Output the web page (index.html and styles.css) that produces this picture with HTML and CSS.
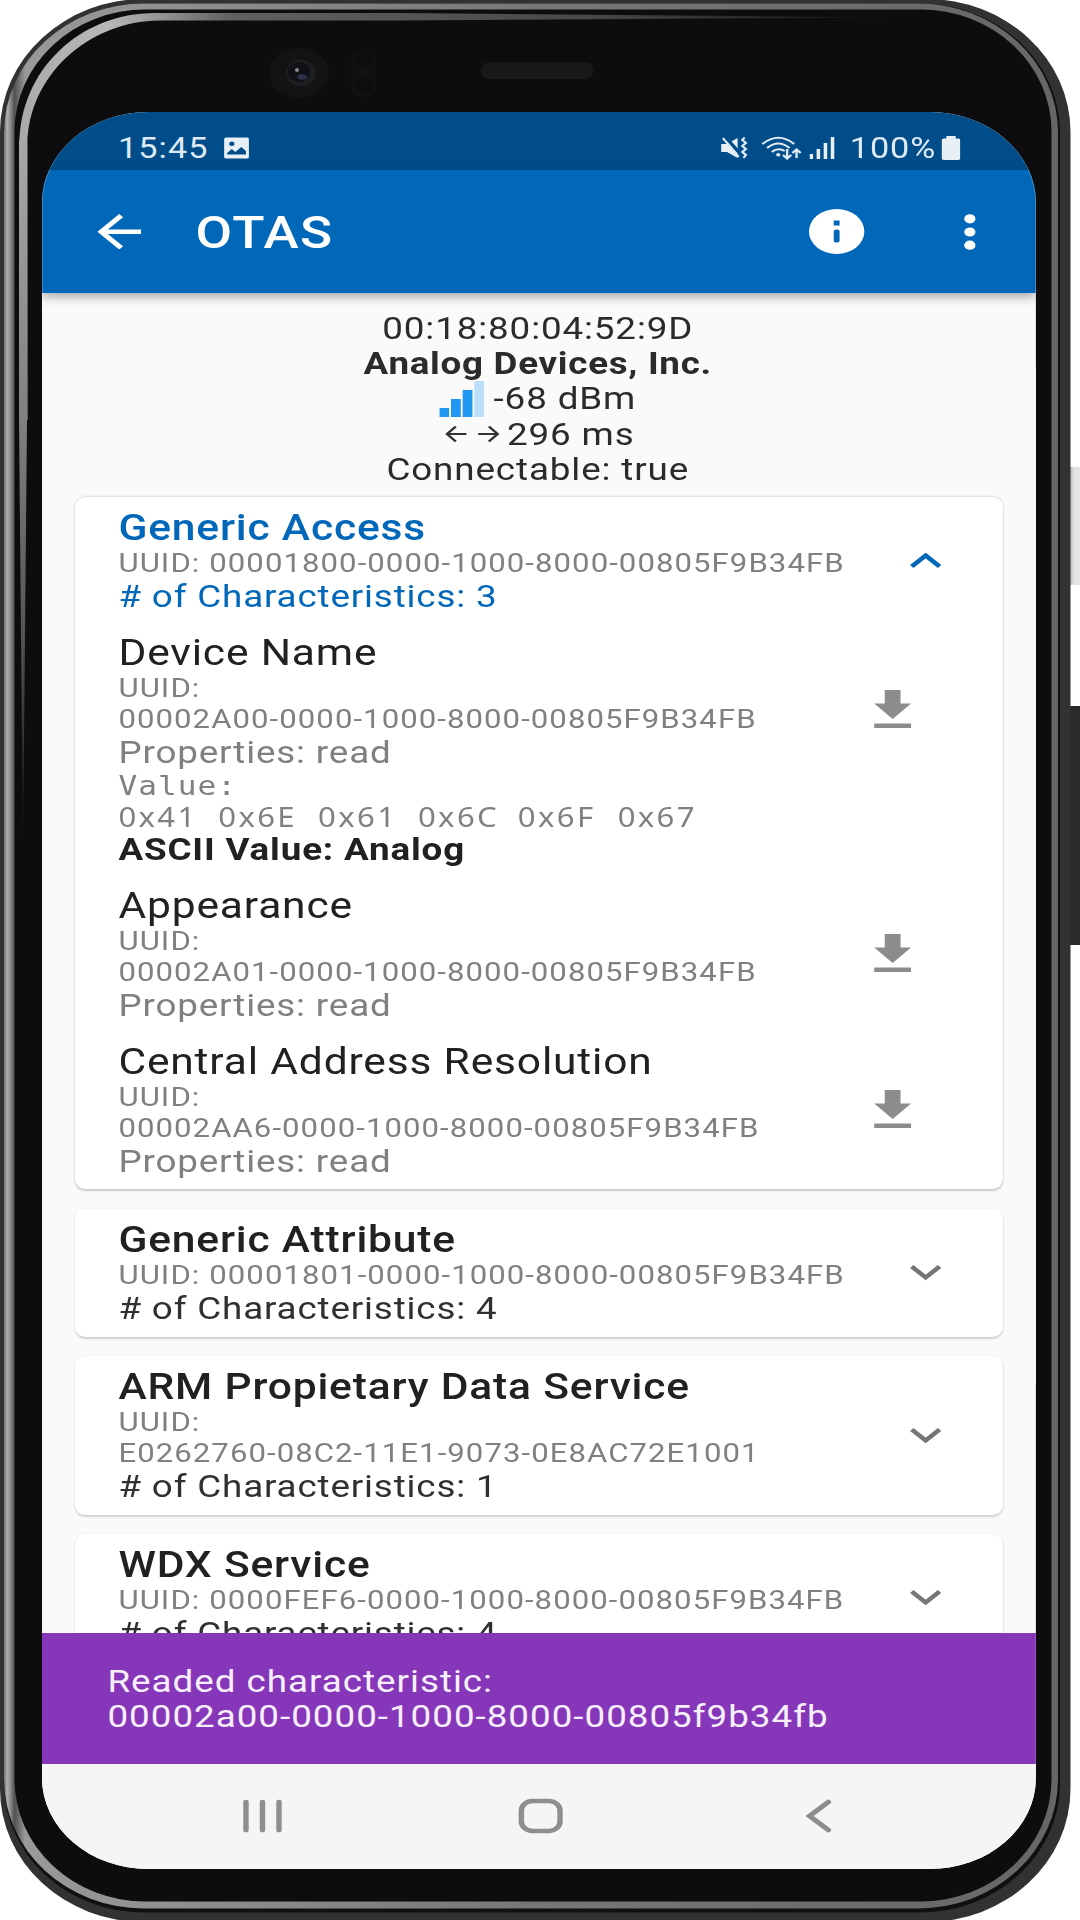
FILE: index.html
```html
<!DOCTYPE html>
<html lang="en">
<head>
<meta charset="utf-8">
<title>OTAS</title>
<link rel="stylesheet" href="styles.css">
</head>
<body>
<div class="phone">
  <svg class="frame" viewBox="0 0 1080 1920" aria-hidden="true">
    <defs>
      <linearGradient id="rim" gradientUnits="userSpaceOnUse" x1="4" y1="0" x2="1059" y2="0">
        <stop offset="0" stop-color="#707070"/><stop offset=".003" stop-color="#b0b0b0"/><stop offset=".005" stop-color="#9a9a9a"/><stop offset=".01" stop-color="#505050"/><stop offset=".02" stop-color="#999"/><stop offset=".5" stop-color="#777"/><stop offset="1" stop-color="#666"/>
      </linearGradient>
      <linearGradient id="shineSide" gradientUnits="userSpaceOnUse" x1="0" y1="130" x2="0" y2="850">
        <stop offset="0" stop-color="#aaa"/><stop offset=".4" stop-color="#808080"/><stop offset=".7" stop-color="#555"/><stop offset="1" stop-color="#0d0d0f"/>
      </linearGradient>
      <linearGradient id="shineTop" gradientUnits="userSpaceOnUse" x1="20" y1="0" x2="900" y2="0">
        <stop offset="0" stop-color="#aaa"/><stop offset=".1" stop-color="#b8b8b8"/><stop offset=".24" stop-color="#606060"/><stop offset=".65" stop-color="#484848"/><stop offset="1" stop-color="#0d0d0f"/>
      </linearGradient>
      <linearGradient id="powerKey" x1="0" y1="0" x2="1" y2="0">
        <stop offset="0" stop-color="#aaa"/><stop offset=".35" stop-color="#e2e2e2"/><stop offset="1" stop-color="#e4e4e4"/>
      </linearGradient>
    </defs>
    <rect x="1069" y="467" width="14" height="118" fill="url(#powerKey)"/>
    <rect x="1066" y="706" width="20" height="239" rx="3" fill="#2a2a2a"/>
    <rect x="0" y="-1" width="1070.500" height="1923" rx="144" ry="133" fill="#323232"/>
    <rect x="4" y="3.500" width="1056" height="1909" rx="140" ry="129" fill="#101012"/>
    <rect x="4" y="3.500" width="1054" height="1905" rx="140" ry="129" fill="url(#rim)"/>
    <rect x="14.500" y="9.500" width="1037" height="1892" rx="131" ry="122" fill="#0d0d0f"/>
    <path d="M19.500 420V145C19.500 70 80 13 155 13H400L900 17.500L400 20.500H160C88 20.500 27.500 77 27.500 145V420Z" fill="url(#shineTop)"/>
    <path d="M23 850L19 420V140H27V420Z" fill="url(#shineSide)"/>
    <ellipse cx="299" cy="73" rx="30" ry="25" fill="#131313"/>
    <ellipse cx="301" cy="73" rx="15" ry="13.500" fill="#1d1e22"/>
    <ellipse cx="299" cy="72" rx="11" ry="10" fill="#101115"/>
    <ellipse cx="302" cy="77" rx="5" ry="3" fill="#293048"/>
    <circle cx="297" cy="70" r="2" fill="#888"/>
    <rect x="351" y="50" width="25" height="47" rx="12" fill="#111"/>
    <ellipse cx="364" cy="60" rx="9" ry="8" fill="#0e0e0e"/>
    <ellipse cx="364" cy="85" rx="9" ry="8" fill="#0e0e0e"/>
    <rect x="480.500" y="62.500" width="113" height="16.500" rx="8" fill="#181818"/>
  </svg>

  <main class="screen">
    <div class="status-bar">
      <span class="clock">15:45</span>
      <svg class="photo-icon" viewBox="0 0 22 22"><path fill-rule="evenodd" d="M2 .5h18a1.500 1.500 0 0 1 1.500 1.500v18a1.500 1.500 0 0 1-1.500 1.500H2A1.500 1.500 0 0 1 .5 20V2A1.500 1.500 0 0 1 2 .5ZM3 17.500h16V14l-4-4-5 5-3-3-4 4ZM7 4.500a2.300 2.300 0 1 0 .01 0Z"/></svg>
      <div class="status-right">
        <svg class="mute-icon" viewBox="0 0 23 22"><path d="M0 7h5l9-6v20l-9-6H0Z"/><path d="M3 -1L17 18" class="cut"/><path class="line" d="M1.500 1L15 20"/><path class="line" d="M20 .5l-2 2.500 3 3-3 3 3 3-3 3 3 3-2 3"/></svg>
        <svg class="wifi-icon" viewBox="0 0 33 24"><g class="line"><path d="M1 8Q14.500-4.500 28 8"/><path d="M5 12Q14.500 3 24 12"/><path d="M9 16Q14.500 11 20 15"/></g><circle cx="14.500" cy="18.800" r="1.800"/><path class="line" d="M22 13v9M18.500 19l3.500 3.500 3.500-3.500M30 22v-8M26.500 17l3.500-3.500 3.500 3.500"/></svg>
        <svg class="signal-icon" viewBox="0 0 22 22"><path d="M0 17h3v5H0ZM6 12h3v10H6ZM12 6h3v16h-3ZM18 0h3v22h-3Z"/></svg>
        <span class="battery-text">100%</span>
        <svg class="battery-icon" viewBox="0 0 16 24"><path d="M4 0h8v2.500h2a2 2 0 0 1 2 2V22a2 2 0 0 1-2 2H2a2 2 0 0 1-2-2V4.500a2 2 0 0 1 2-2h2Z"/></svg>
      </div>
    </div>

    <header class="app-bar">
      <svg class="back-icon" viewBox="4 4 16 16" preserveAspectRatio="none"><path d="M20 11H7.830l5.590-5.590L12 4l-8 8 8 8 1.410-1.410L7.830 13H20Z"/></svg>
      <h1>OTAS</h1>
      <svg class="info-icon" viewBox="0 0 48 45"><ellipse cx="24" cy="22.500" rx="23.500" ry="22.500"/><path class="info-mark" d="M21.500 11.500h5v5h-5ZM21.500 22.500q0-2 2.500-2t2.500 2v9q0 2-2.500 2t-2.500-2Z"/></svg>
      <svg class="more-icon" viewBox="0 0 10 36"><ellipse cx="5" cy="4.800" rx="4.800" ry="4.600"/><ellipse cx="5" cy="18" rx="4.800" ry="4.600"/><ellipse cx="5" cy="31.200" rx="4.800" ry="4.600"/></svg>
    </header>

    <div class="content">
      <section class="summary">
        <div>00:18:80:04:52:9D</div>
        <div class="strong">Analog Devices, Inc.</div>
        <div class="row"><svg class="rssi-icon" viewBox="0 0 38 36"><path d="M0 27h8.300v9H0ZM9.900 18h8.300v18H9.900ZM19.800 9h8.300v27h-8.300Z" fill="#2196f3"/><path d="M29.700 0H38v36h-8.300Z" fill="#bbdefb"/></svg><span>-68 dBm</span></div>
        <div class="row interval"><svg class="range-icon" viewBox="0 0 46 18"><path d="M18 9H2M9 1.500L1.500 9 9 16.500M28 9h16M37 1.500L44.500 9 37 16.500"/></svg><span>296 ms</span></div>
        <div class="connectable">Connectable: true</div>
      </section>

      <article class="card open">
        <div class="service">
          <div>
            <h2>Generic Access</h2>
            <p class="uuid">UUID: 00001800-0000-1000-8000-00805F9B34FB</p>
            <p class="count"># of Characteristics: 3</p>
          </div>
          <svg class="chevron" viewBox="0 0 27 17"><path d="M1.700 13.500L13.500 2.500l11.800 11"/></svg>
        </div>
        <div class="characteristic first">
          <div>
            <h3>Device Name</h3>
            <p class="uuid">UUID:<br>00002A00-0000-1000-8000-00805F9B34FB</p>
            <p class="props">Properties: read</p>
            <p class="value-label">Value:</p>
            <p class="bytes"><span>0x41</span><span>0x6E</span><span>0x61</span><span>0x6C</span><span>0x6F</span><span>0x67</span></p>
            <p class="ascii">ASCII Value: Analog</p>
          </div>
          <svg class="download" viewBox="5 3 14 17"><path d="M19 9h-4V3H9v6H5l7 7 7-7ZM5 18v2h14v-2Z"/></svg>
        </div>
        <div class="characteristic">
          <div>
            <h3>Appearance</h3>
            <p class="uuid">UUID:<br>00002A01-0000-1000-8000-00805F9B34FB</p>
            <p class="props">Properties: read</p>
          </div>
          <svg class="download" viewBox="5 3 14 17"><path d="M19 9h-4V3H9v6H5l7 7 7-7ZM5 18v2h14v-2Z"/></svg>
        </div>
        <div class="characteristic">
          <div>
            <h3>Central Address Resolution</h3>
            <p class="uuid">UUID:<br>00002AA6-0000-1000-8000-00805F9B34FB</p>
            <p class="props">Properties: read</p>
          </div>
          <svg class="download" viewBox="5 3 14 17"><path d="M19 9h-4V3H9v6H5l7 7 7-7ZM5 18v2h14v-2Z"/></svg>
        </div>
      </article>

      <article class="card">
        <div class="service">
          <div>
            <h2>Generic Attribute</h2>
            <p class="uuid">UUID: 00001801-0000-1000-8000-00805F9B34FB</p>
            <p class="count"># of Characteristics: 4</p>
          </div>
          <svg class="chevron" viewBox="0 0 27 17"><path d="M1.700 2.500l11.800 11 11.800-11"/></svg>
        </div>
      </article>

      <article class="card">
        <div class="service">
          <div>
            <h2>ARM Propietary Data Service</h2>
            <p class="uuid">UUID:<br>E0262760-08C2-11E1-9073-0E8AC72E1001</p>
            <p class="count"># of Characteristics: 1</p>
          </div>
          <svg class="chevron" viewBox="0 0 27 17"><path d="M1.700 2.500l11.800 11 11.800-11"/></svg>
        </div>
      </article>

      <article class="card">
        <div class="service">
          <div>
            <h2>WDX Service</h2>
            <p class="uuid">UUID: 0000FEF6-0000-1000-8000-00805F9B34FB</p>
            <p class="count"># of Characteristics: 4</p>
          </div>
          <svg class="chevron" viewBox="0 0 27 17"><path d="M1.700 2.500l11.800 11 11.800-11"/></svg>
        </div>
      </article>
    </div>

    <div class="snackbar">Readed characteristic:<br>00002a00-0000-1000-8000-00805f9b34fb</div>

    <nav class="nav-bar">
      <svg viewBox="0 0 40 36"><path d="M6 4v28M20 4v28M34 4v28"/></svg>
      <svg viewBox="0 0 40 36"><rect x="3.600" y="3" width="32.800" height="30" rx="9.500"/></svg>
      <svg viewBox="0 0 40 36"><path d="M28 4L12 18l16 14"/></svg>
    </nav>
  </main>
</div>
</body>
</html>
```
FILE: styles.css
```css
* { box-sizing: border-box; }

body {
  margin: 0;
  background: #fff;
  font-family: Roboto, sans-serif;
}

h1, h2, h3, p { margin: 0; font-weight: 400; }
svg { display: block; flex: none; }

.phone {
  position: relative;
  width: 1080px;
  height: 1920px;
  padding: 112px 0 0 42px;
  overflow: hidden;
}

.frame {
  position: absolute;
  inset: 0;
  width: 1080px;
  height: 1920px;
}

.screen {
  position: relative;
  display: flex;
  flex-direction: column;
  width: 843px;
  height: 1757px;
  overflow: hidden;
  border-radius: 90px / 91px;
  background: #fafafa;
  color: #2b2b2b;
  transform: scaleX(1.179);
  transform-origin: 0 0;
}

/* Status bar */
.status-bar {
  display: flex;
  align-items: center;
  flex: none;
  height: 58px;
  padding: 13px 64.500px 0 64.500px;
  background: #004d8a;
  color: #dfeaf3;
  font-size: 29px;
  line-height: 34px;
}
.status-bar svg { fill: #e8f0f6; height: 22px; }
.clock { letter-spacing: .9px; }
.photo-icon { width: 22px; margin-left: 12.500px; }
.status-right { display: flex; align-items: center; margin-left: auto; }
.status-bar .line { fill: none; stroke: #e0eaf2; stroke-width: 2; }
.status-bar .cut { fill: none; stroke: #004d8a; stroke-width: 3; }
.mute-icon { width: 23px; margin-right: 11px; }
.status-bar .wifi-icon { width: 33px; height: 24px; margin-right: 8px; overflow: visible; }
.signal-icon { width: 22px; margin-right: 12px; }
.battery-text { letter-spacing: .8px; }
.status-bar .battery-icon { width: 16px; height: 24px; margin-left: 4px; }

/* App bar */
.app-bar {
  display: flex;
  align-items: center;
  flex: none;
  position: relative;
  z-index: 1;
  height: 123px;
  padding: 0 51.500px 0 46.700px;
  background: #0067b9;
  color: #fff;
  box-shadow: 0 4px 9px rgba(0, 0, 0, .32);
}
.app-bar svg { fill: #fff; }
.back-icon { width: 37px; height: 35.500px; }
.app-bar h1 {
  margin: 3px 0 0 46.500px;
  font-size: 45px;
  font-weight: 500;
  line-height: 52px;
  letter-spacing: 1.200px;
}
.info-icon { width: 48px; height: 45px; margin-left: auto; }
.app-bar .info-mark { fill: #0067b9; }
.more-icon { width: 10px; height: 36px; margin-left: 83.500px; }

/* Scrolling content */
.content {
  flex: 1;
  min-height: 0;
  overflow: hidden;
  padding: 18px 28px 0 27.500px;
}
.summary {
  height: 186px;
  padding-right: 1.500px;
  text-align: center;
  font-size: 31.200px;
  line-height: 35.200px;
  letter-spacing: .75px;
}
.strong { font-weight: 700; letter-spacing: .6px; }
.row { display: flex; justify-content: center; align-items: center; }
.interval { padding-left: 4px; }
.rssi-icon { width: 38px; height: 36px; margin: -1px 8px -1px 0; }
.range-icon { width: 46px; height: 18px; margin-right: 6px; fill: none; stroke: #333; stroke-width: 2.200; }

.card {
  margin-bottom: 19px;
  padding: 10px 49px 10px 37.300px;
  border-radius: 9px;
  background: #fff;
  box-shadow: 0 2px 2px rgba(0, 0, 0, .16), 0 0 2px rgba(0, 0, 0, .07);
}
.card.open {
  margin-bottom: 20px;
  padding-bottom: 9px;
  box-shadow: 0 2px 2px rgba(0, 0, 0, .2), 0 -1px 2px rgba(0, 0, 0, .12);
}
.service { display: flex; justify-content: space-between; align-items: center; }
.card h2, .card h3 {
  padding-top: 2px;
  font-size: 36.100px;
  line-height: 39.200px;
  letter-spacing: .7px;
  color: #212121;
}
.card h2 { font-weight: 500; }
.uuid, .value-label, .bytes {
  font-size: 26.400px;
  line-height: 30.700px;
  letter-spacing: .9px;
  color: #808080;
}
.count, .props, .ascii {
  font-size: 31.200px;
  line-height: 35.700px;
  letter-spacing: .72px;
}
.count, .props { padding-top: .5px; }
.count { color: #303030; }
.open h2, .open .count { color: #0067b9; }
.props { color: #808080; }
.ascii { font-weight: 700; color: #212121; }
.value-label { font-family: "DejaVu Sans Mono", monospace; }
.bytes {
  display: grid;
  grid-template-columns: repeat(6, 84.700px);
  font-family: "Noto Sans", sans-serif;
  letter-spacing: 2px;
}
.chevron { width: 27px; height: 17px; margin-right: 3px; fill: none; stroke: #757575; stroke-width: 4.200; }
.open .chevron { stroke: #0067b9; }

.characteristic {
  display: flex;
  justify-content: space-between;
  align-items: center;
  margin-top: 17.100px;
}
.download { width: 33px; height: 38px; margin: -3px 28.500px 0 0; fill: #8c8c8c; }
.first { align-items: flex-start; }
.first .download { margin-top: 58px; }

/* Snackbar and system navigation */
.snackbar {
  flex: none;
  height: 131.500px;
  padding: 31px 55.500px 0;
  background: #8636b9;
  color: #f6effa;
  font-size: 31.200px;
  line-height: 35.200px;
  letter-spacing: .84px;
}
.nav-bar {
  display: flex;
  justify-content: center;
  align-items: center;
  gap: 195.800px;
  flex: none;
  height: 105px;
  padding: 0 0 1px 3px;
  background: #f5f5f5;
}
.nav-bar svg { width: 40px; height: 36px; fill: none; stroke: #8e8e8e; stroke-width: 4.600; stroke-linecap: round; }
```
